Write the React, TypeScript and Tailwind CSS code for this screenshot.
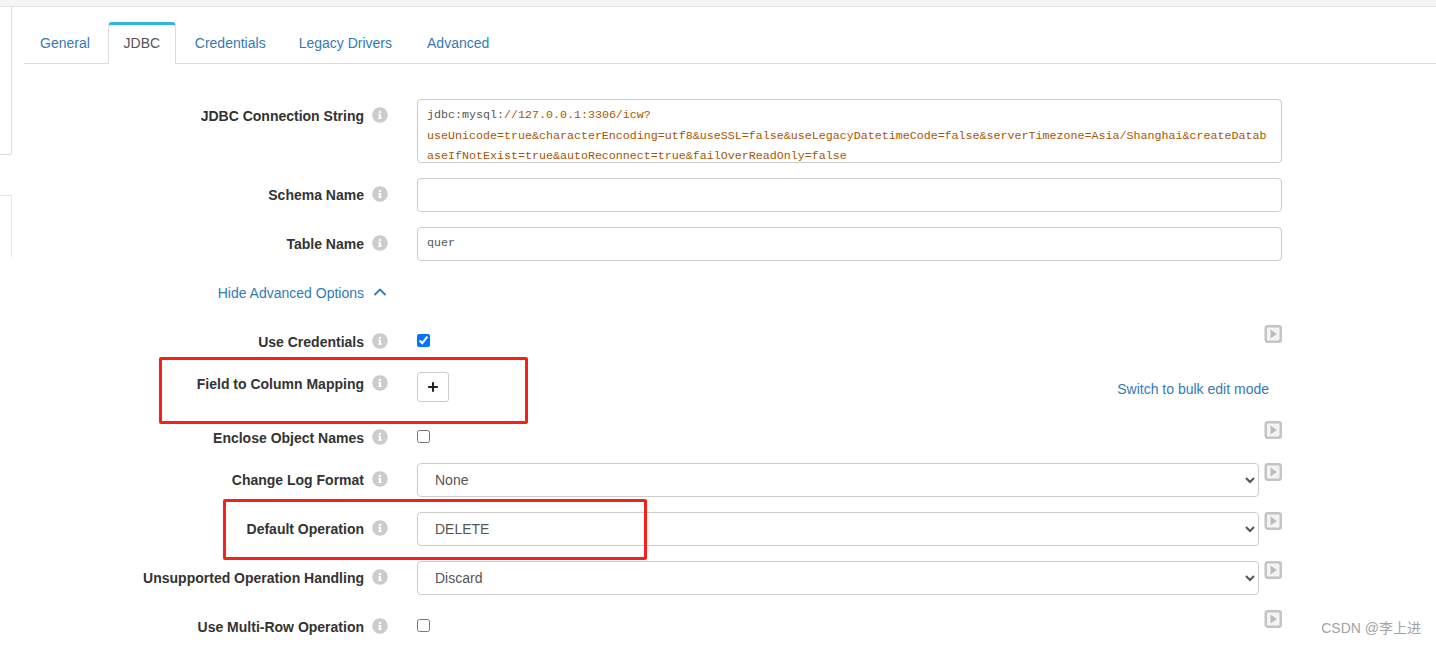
import React from 'react';
import { ChevronUp, Plus } from 'lucide-react';
import { FaInfoCircle } from 'react-icons/fa';

const InfoIcon = () => <FaInfoCircle className="ml-[8px] mt-[-2px] w-[16px] h-[16px] text-[#cccccc] shrink-0" />;

const PlayIcon = () => (
  <svg width="18" height="18" viewBox="0 0 18 18" className="shrink-0">
    <rect x="1.75" y="1.25" width="15" height="15.5" rx="2" fill="#f4f4f4" stroke="#c4c4c4" strokeWidth="2.5" />
    <path d="M6.5 4.5 L13 9 L6.5 13.5 Z" fill="#b9bcc0" />
  </svg>
);

const Row = ({ label, className, children }: { label: string; className: string; children?: React.ReactNode }) => (
  <div className={`flex items-center ${className}`}>
    <div className="w-[340px] text-right font-bold text-[14px] text-[#333333] shrink-0">{label}</div>
    <InfoIcon />
    <div className="ml-[29px] flex-1 min-w-0 flex items-center">{children}</div>
  </div>
);

const Select = ({ value }: { value: string }) => (
  <select
    defaultValue={value}
    className="h-[34px] w-[842px] bg-white border border-[#cccccc] rounded-[4px] pl-[13px] text-[14px] text-[#555555]"
  >
    <option>{value}</option>
  </select>
);

const Check = ({ on }: { on?: boolean }) => (
  <input type="checkbox" defaultChecked={on} className="w-[13px] h-[13px] m-0 mb-[4px] accent-[#0075ff]" />
);

const TextBox = ({ value }: { value?: string }) => (
  <div className="h-[34px] w-full border border-[#cccccc] rounded-[4px] px-[9px] flex items-center font-['Liberation_Mono',monospace] text-[11.67px] text-[#555555]">
    {value}
  </div>
);

const App = () => {
  return (
    <div className="relative w-[1436px] h-[645px] overflow-hidden bg-white font-['Liberation_Sans',Arial,sans-serif] text-[14px]">
      {/* top strip */}
      <div className="h-[7px] bg-[#f5f5f5] border-b border-[#e3e3e3]" />

      <div className="flex">
        {/* cut off side panels */}
        <div className="w-[12px] shrink-0">
          <div className="h-[148px] bg-white border-r border-b border-[#dddddd] rounded-br-[2px]" />
          <div className="h-[62px] mt-[40px] border-r border-t border-[#e6e6e6]" />
        </div>

        <div className="flex-1 pl-[12px] pt-[15px]">
          {/* tabs */}
          <div className="flex h-[42px] border-b border-[#dddddd] pl-[1px]">
            <div className="px-[15px] pt-[11px] text-[#337ab7]">General</div>
            <div className="ml-[3px] h-[42px] w-[68px] bg-white border-x border-[#dddddd] border-t-[3px] border-t-[#2fb4e6] rounded-t-[4px] pt-[8px] text-center text-[#555555]">JDBC</div>
            <div className="ml-[4px] px-[15px] pt-[11px] text-[#337ab7]">Credentials</div>
            <div className="ml-[3px] px-[15px] pt-[11px] text-[#337ab7]">Legacy Drivers</div>
            <div className="ml-[5px] px-[15px] pt-[11px] text-[#337ab7]">Advanced</div>
          </div>

          {/* form, right edge of the controls at x=1282 */}
          <div className="w-[1258px] pt-[35px]">
            <div className="flex items-start h-[64px]">
              <div className="w-[340px] text-right font-bold text-[14px] text-[#333333] mt-[7px] shrink-0">JDBC Connection String</div>
              <FaInfoCircle className="ml-[8px] mt-[8px] w-[16px] h-[16px] text-[#cccccc] shrink-0" />
              <div className="ml-[29px] flex-1 h-[64px] border border-[#cccccc] rounded-[4px] pl-[9px] pt-[5px] font-['Liberation_Mono',monospace] text-[11.67px] leading-[20.5px] text-[#aa5500] break-all">
                <span className="text-[#555555]">jdbc:mysql:</span>//127.0.0.1:3306/icw?
                <br />
                useUnicode=true&amp;characterEncoding=utf8&amp;useSSL=false&amp;useLegacyDatetimeCode=false&amp;serverTimezone=Asia/Shanghai&amp;createDatab
                <br />
                aseIfNotExist=true&amp;autoReconnect=true&amp;failOverReadOnly=false
              </div>
            </div>

            <Row label="Schema Name" className="h-[34px] mt-[15px]"><TextBox /></Row>
            <Row label="Table Name" className="h-[34px] mt-[15px]"><TextBox value="quer" /></Row>

            <div className="flex items-center h-[34px] mt-[15px] text-[#337ab7]">
              <div className="w-[340px] text-right shrink-0">Hide Advanced Options</div>
              <ChevronUp className="ml-[6px] mt-[-3px] w-[20px] h-[20px]" strokeWidth={2.2} />
            </div>

            <Row label="Use Credentials" className="h-[34px] mt-[15px]">
              <Check on />
              <div className="ml-auto mb-[16px]"><PlayIcon /></div>
            </Row>

            <div className="flex items-start h-[48px] mt-[14px]">
              <div className="w-[340px] text-right font-bold text-[14px] text-[#333333] mt-[1px] shrink-0">Field to Column Mapping</div>
              <FaInfoCircle className="ml-[8px] mt-[2px] w-[16px] h-[16px] text-[#cccccc] shrink-0" />
              <div className="ml-[29px] flex-1 flex items-start">
                <button className="w-[32px] h-[30px] mt-[-1px] bg-white border border-[#cccccc] rounded-[3px] flex items-center justify-center text-[#222222]">
                  <Plus className="w-[14px] h-[14px]" strokeWidth={3.5} />
                </button>
                <a className="ml-auto mr-[13px] mt-[6px] text-[#337ab7]">Switch to bulk edit mode</a>
              </div>
            </div>

            <Row label="Enclose Object Names" className="h-[34px]">
              <Check />
              <div className="ml-auto mb-[16px]"><PlayIcon /></div>
            </Row>

            <Row label="Change Log Format" className="h-[34px] mt-[8px]">
              <Select value="None" />
              <div className="ml-auto mb-[16px]"><PlayIcon /></div>
            </Row>
            <Row label="Default Operation" className="h-[34px] mt-[15px]">
              <Select value="DELETE" />
              <div className="ml-auto mb-[16px]"><PlayIcon /></div>
            </Row>
            <Row label="Unsupported Operation Handling" className="h-[34px] mt-[15px]">
              <Select value="Discard" />
              <div className="ml-auto mb-[16px]"><PlayIcon /></div>
            </Row>
            <Row label="Use Multi-Row Operation" className="h-[34px] mt-[15px]">
              <Check />
              <div className="ml-auto mb-[16px]"><PlayIcon /></div>
            </Row>
          </div>
        </div>
      </div>

      {/* annotation boxes drawn over the screenshot */}
      <div className="absolute left-[159px] top-[357px] w-[369px] h-[67px] border-[3px] border-[#f5201a] rounded-[2px]" />
      <div className="absolute left-[223px] top-[499px] w-[424px] h-[61px] border-[3px] border-[#f5201a] rounded-[2px]" />

      {/* watermark */}
      <div className="absolute right-[15px] top-[618px] text-[14px] text-[#a3a3a3] font-['Liberation_Sans','Noto_Sans_CJK_SC',sans-serif]">CSDN @李上进</div>
    </div>
  );
};

export default App;
